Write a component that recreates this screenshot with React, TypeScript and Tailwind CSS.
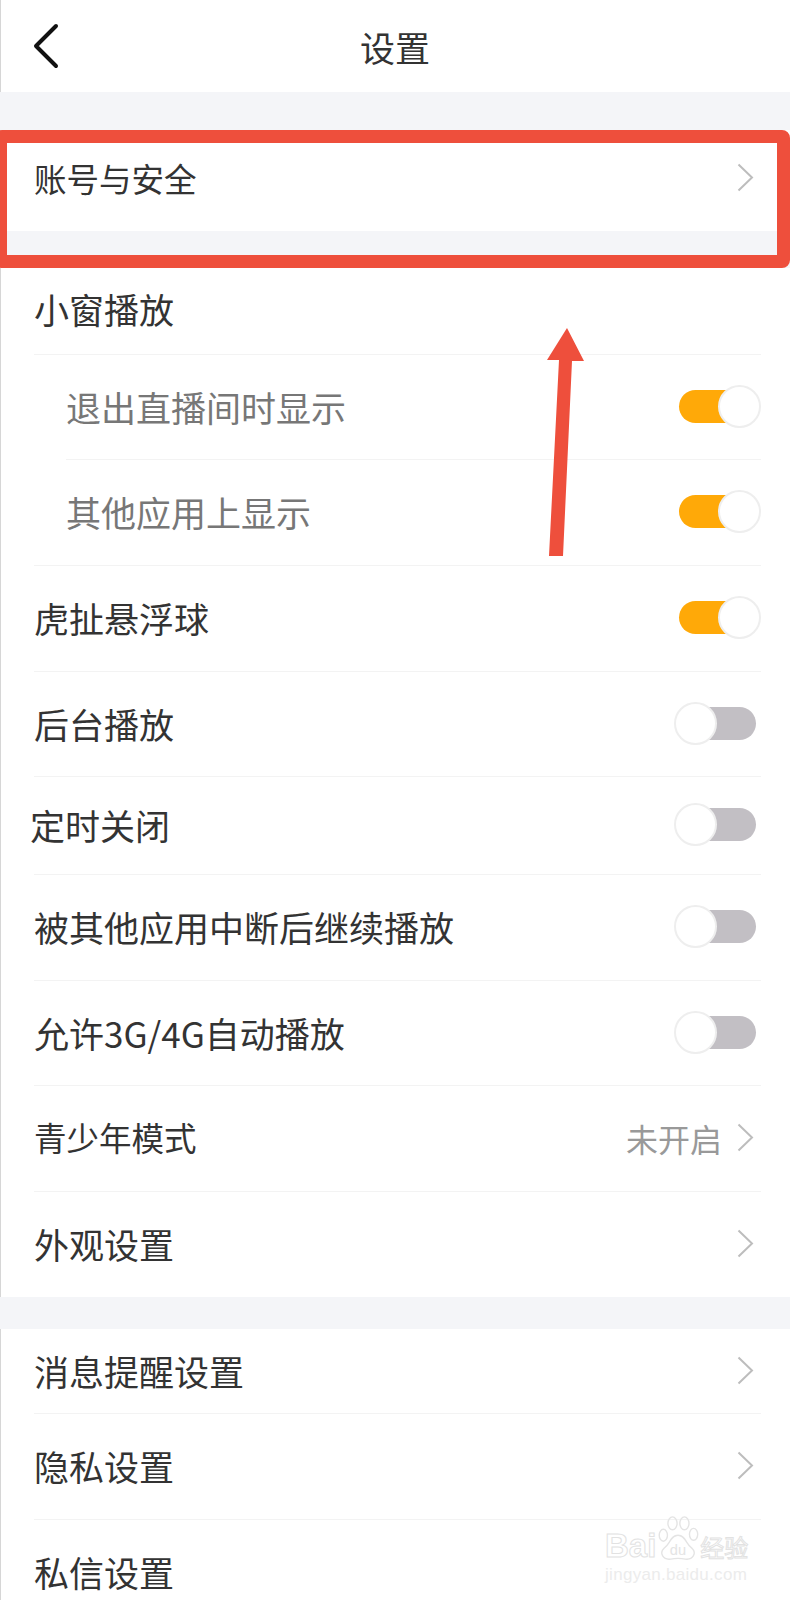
const font = { fontFamily: '"Noto Sans CJK SC", "Noto Sans", sans-serif' };

function Chevron() {
  return (
    <svg width="17" height="29" viewBox="0 0 17 29" fill="none" className="mr-[7px] shrink-0">
      <path d="M1.5 1.5 L15 14.5 L1.5 27.5" stroke="#bdbdbd" strokeWidth="2" />
    </svg>
  );
}

function Toggle({ on }: { on: boolean }) {
  const knob = "relative w-[43px] h-[43px] rounded-full bg-white border-2 border-[#eeeeee] shrink-0";
  if (on) {
    return (
      <div className="flex items-center shrink-0">
        <div className="w-[60px] h-[33px] rounded-l-full bg-[#ffa908]" />
        <div className={`${knob} -ml-[21px]`} />
      </div>
    );
  }
  return (
    <div className="flex items-center mr-[5px] shrink-0">
      <div className={`${knob} z-10`} />
      <div className="w-[60px] h-[33px] rounded-r-full bg-[#c2bfc4] -ml-[21px]" />
    </div>
  );
}

type Row = {
  label: string;
  h: string;
  right?: "on" | "off" | "arrow" | "value";
  ml?: string;
  line?: boolean;
  text?: string;
};

const group1: Row[] = [
  { label: "小窗播放", h: "h-[87px]", line: true, text: "text-[35px] text-[#333333] -mt-[3px]" },
  { label: "退出直播间时显示", h: "h-[105px]", right: "on", line: true, ml: "ml-[66px]", text: "text-[35px] text-[#777777]" },
  { label: "其他应用上显示", h: "h-[106px]", right: "on", line: true, text: "text-[35px] text-[#777777] ml-[32px]" },
  { label: "虎扯悬浮球", h: "h-[106px]", right: "on", line: true },
  { label: "后台播放", h: "h-[105px]", right: "off", line: true },
  { label: "定时关闭", h: "h-[98px]", right: "off", line: true, text: "text-[35px] text-[#333333] -ml-[4px]" },
  { label: "被其他应用中断后继续播放", h: "h-[106px]", right: "off", line: true },
  { label: "允许3G/4G自动播放", h: "h-[105px]", right: "off", line: true },
  { label: "青少年模式", h: "h-[106px]", right: "value", line: true, text: "text-[32.5px] text-[#333333]" },
  { label: "外观设置", h: "h-[105px]", right: "arrow" },
];

const group2: Row[] = [
  { label: "消息提醒设置", h: "h-[85px]", right: "arrow", line: true },
  { label: "隐私设置", h: "h-[106px]", right: "arrow", line: true },
  { label: "私信设置", h: "h-[106px]", line: true },
];

function SettingRow({ row }: { row: Row }) {
  return (
    <div
      className={`${row.h} ${row.ml ?? "ml-[34px]"} mr-[29px] pb-[2px] flex items-center justify-between border-[#f3f3f3] ${
        row.line ? "border-b" : ""
      }`}
    >
      <span className={`leading-none ${row.text ?? "text-[35px] text-[#333333]"}`}>{row.label}</span>
      {row.right === "on" && <Toggle on />}
      {row.right === "off" && <Toggle on={false} />}
      {row.right === "arrow" && <Chevron />}
      {row.right === "value" && (
        <div className="flex items-center gap-[15px]">
          <span className="text-[32px] leading-none text-[#999999]">未开启</span>
          <Chevron />
        </div>
      )}
    </div>
  );
}

function Watermark() {
  return (
    <div className="absolute left-[605px] top-[1515px] w-[146px] select-none">
      <div className="flex items-end h-[46px] whitespace-nowrap">
        <span
          className="text-[33px] leading-[30px] font-bold text-white [-webkit-text-stroke:1px_#e2e2e2]"
          style={{ fontFamily: '"Liberation Sans", sans-serif' }}
        >
          Bai
        </span>
        <svg width="44" height="46" viewBox="0 0 48 50" fill="none" stroke="#e4e4e4" strokeWidth="1.5" className="shrink-0">
          <ellipse cx="8" cy="22" rx="4.5" ry="6.5" />
          <ellipse cx="18" cy="9" rx="5" ry="7" />
          <ellipse cx="31" cy="9" rx="5" ry="7" />
          <ellipse cx="41" cy="21" rx="4.5" ry="6.5" />
          <path d="M24 22 C16 22 15 32 9 36 C3 42 8 49 16 48 C21 47 27 47 32 48 C40 49 45 42 39 36 C33 32 32 22 24 22 Z" />
          <text x="24" y="44" textAnchor="middle" fontSize="16" fill="#e4e4e4" stroke="none" fontFamily="Liberation Sans, sans-serif">
            du
          </text>
        </svg>
        <span className="text-[24px] leading-[28px] text-white [-webkit-text-stroke:1px_#e2e2e2]">经验</span>
      </div>
      <div
        className="text-[17px] leading-[22px] tracking-[0.3px] text-[#ececec] mt-[3px] whitespace-nowrap"
        style={{ fontFamily: '"Liberation Sans", sans-serif' }}
      >
        jingyan.baidu.com
      </div>
    </div>
  );
}

export default function App() {
  return (
    <div className="relative w-[790px] h-[1600px] overflow-hidden bg-white shadow-[inset_1px_0_0_#d6d6d6]" style={font}>
      {/* header */}
      <div className="h-[92px] flex items-center relative">
        <svg width="30" height="46" viewBox="0 0 30 46" fill="none" className="ml-[31px]">
          <path d="M25 3 L5 23 L25 43" stroke="#111111" strokeWidth="4" strokeLinecap="round" strokeLinejoin="round" />
        </svg>
        <span className="absolute left-0 right-0 text-center text-[35px] leading-none text-[#333333]">设置</span>
      </div>

      <div className="h-[38px] bg-[#f4f5f8]" />

      <div className="h-[101px] ml-[34px] mr-[29px] flex items-center justify-between">
        <span className="text-[32.5px] leading-none text-[#333333] -mt-[4px]">账号与安全</span>
        <div className="-mt-[6px]">
          <Chevron />
        </div>
      </div>
      <div className="h-[37px] bg-[#f4f5f8]" />

      {group1.map((row) => (
        <SettingRow key={row.label} row={row} />
      ))}

      <div className="h-[32px] bg-[#f4f5f8]" />

      {group2.map((row) => (
        <SettingRow key={row.label} row={row} />
      ))}

      {/* annotation from the screenshot */}
      <div className="absolute -left-[6px] top-[130px] w-[796px] h-[138px] border-[13px] border-[#ee4f3c] rounded-[8px]" />
      <svg width="790" height="600" viewBox="0 0 790 600" className="absolute left-0 top-0 pointer-events-none">
        <polygon points="567,328 584,361 572,361 563,556 549,556 559,360 547,360" fill="#ee4f3c" />
      </svg>

      <Watermark />
    </div>
  );
}
